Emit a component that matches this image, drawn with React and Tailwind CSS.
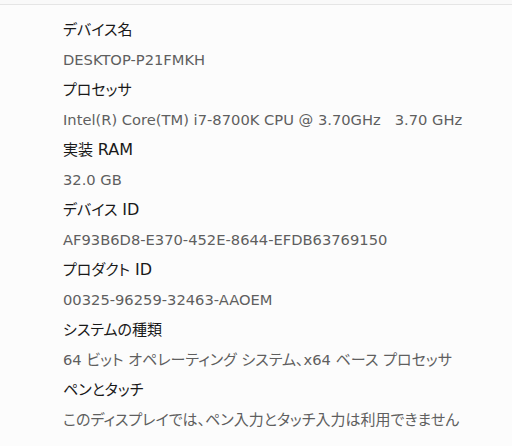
const specs = [
  { label: "デバイス名", value: "DESKTOP-P21FMKH" },
  { label: "プロセッサ", value: "Intel(R) Core(TM) i7-8700K CPU @ 3.70GHz   3.70 GHz" },
  { label: "実装 RAM", value: "32.0 GB" },
  { label: "デバイス ID", value: "AF93B6D8-E370-452E-8644-EFDB63769150" },
  { label: "プロダクト ID", value: "00325-96259-32463-AAOEM" },
  { label: "システムの種類", value: "64 ビット オペレーティング システム、x64 ベース プロセッサ" },
  { label: "ペンとタッチ", value: "このディスプレイでは、ペン入力とタッチ入力は利用できません" },
];

const Runs = ({ text, latinClass }) =>
  text.split(/([\x21-\x7e][\x20-\x7e]*[\x21-\x7e]|[\x21-\x7e])/).map((part, i) =>
    i % 2 === 1 ? (
      <span key={i} className={latinClass}>
        {part}
      </span>
    ) : (
      part
    ),
  );

export default function App() {
  return (
    <div
      className="h-[446px] w-[512px] overflow-hidden bg-[#f9f9f9]"
      style={{ fontFamily: '"DejaVu Sans", "Noto Sans CJK JP", sans-serif' }}
    >
      <div className="mt-[4px] h-full border-t border-[#e5e5e5] bg-[#fcfcfc] pt-[10px] pl-[63px]">
        {specs.map((item) => (
          <div key={item.label}>
            <p className="flex h-[30px] items-center whitespace-pre text-[15px] text-[#191919] [font-feature-settings:'palt']">
              <Runs text={item.label} latinClass="text-[16px]" />
            </p>
            <p className="flex h-[30px] items-center whitespace-pre text-[15px] text-[#5f5f5f] [font-feature-settings:'palt']">
              <Runs text={item.value} latinClass="text-[14.7px]" />
            </p>
          </div>
        ))}
      </div>
    </div>
  );
}
